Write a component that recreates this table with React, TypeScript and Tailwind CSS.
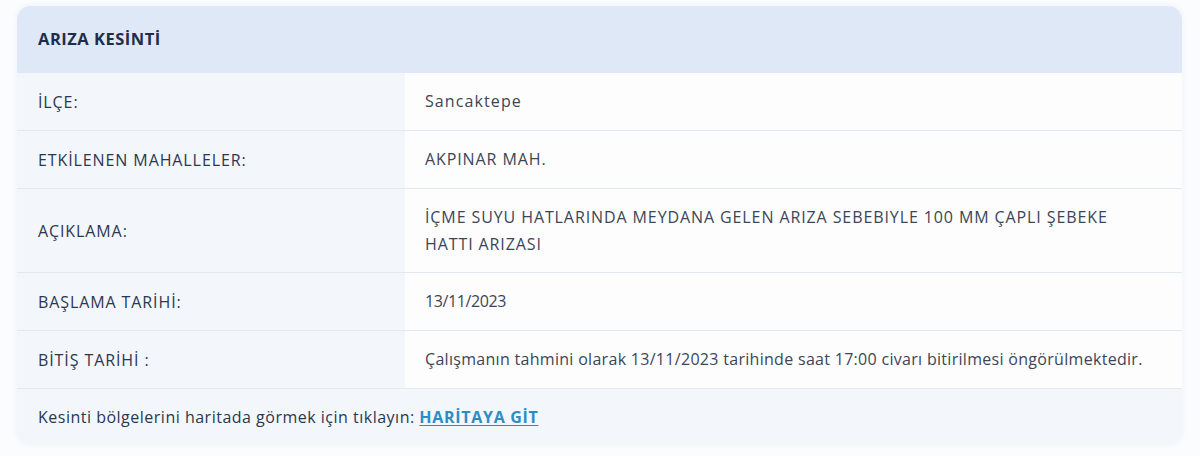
import React from 'react';

// =============================================================================
// DATA
// =============================================================================

interface Row {
  label: string;
  value: React.ReactNode;
  height: string;
  valueTracking: string;
}

const rows: Row[] = [
  { label: 'İLÇE:', value: 'Sancaktepe', height: 'h-[57px]', valueTracking: 'tracking-[1.1px]' },
  {
    label: 'ETKİLENEN MAHALLELER:',
    value: 'AKPINAR MAH.',
    height: 'h-[58px]',
    valueTracking: 'tracking-[0.9px]',
  },
  {
    label: 'AÇIKLAMA:',
    value: (
      <>
        İÇME SUYU HATLARINDA MEYDANA GELEN ARIZA SEBEBIYLE 100 MM ÇAPLI ŞEBEKE
        <br />
        HATTI ARIZASI
      </>
    ),
    height: 'h-[84px]',
    valueTracking: 'tracking-[0.9px]',
  },
  { label: 'BAŞLAMA TARİHİ:', value: '13/11/2023', height: 'h-[58px]', valueTracking: 'tracking-[-0.4px]' },
  {
    label: 'BİTİŞ TARİHİ :',
    value:
      'Çalışmanın tahmini olarak 13/11/2023 tarihinde saat 17:00 civarı bitirilmesi öngörülmektedir.',
    height: 'h-[58px]',
    valueTracking: 'tracking-[0.3px]',
  },
];

// =============================================================================
// APP
// =============================================================================

export default function App() {
  return (
    <div className="w-[1200px] h-[456px] bg-[#fbfcfe] pt-[6px] pl-[17px] font-['Open_Sans',sans-serif] text-[16px]">
      <div className="w-[1165px] rounded-[14px] overflow-hidden bg-[#f3f6fb] shadow-[0_0_6px_rgba(30,50,90,0.06)]">
        {/* Header */}
        <div className="h-[67px] bg-[#dfe8f6] flex items-center pl-[21px]">
          <span className="text-[16.5px] font-bold tracking-[0.5px] text-[#1f2d4d]">ARIZA KESİNTİ</span>
        </div>

        {/* Rows */}
        {rows.map((row, idx) => (
          <div
            key={idx}
            className={`flex ${row.height} ${idx > 0 ? 'border-t border-[#e3e8ef]' : ''}`}
          >
            <div className="w-[388px] bg-[#f3f6fb] flex items-center pl-[21px] tracking-[0.9px] text-[#2b3850]">
              {row.label}
            </div>
            <div
              className={`flex-1 bg-[#fdfdfe] flex items-center pl-[20px] leading-[27px] text-[#3c4556] ${row.valueTracking}`}
            >
              <div>{row.value}</div>
            </div>
          </div>
        ))}

        {/* Footer */}
        <div className="h-[56px] border-t border-[#e3e8ef] flex items-center pl-[21px] tracking-[0.5px] text-[#2b3850]">
          Kesinti bölgelerini haritada görmek için tıklayın:&nbsp;
          <a href="#" className="font-bold tracking-[0.7px] text-[#2e8cc4] underline underline-offset-2">
            HARİTAYA GİT
          </a>
        </div>
      </div>
    </div>
  );
}
